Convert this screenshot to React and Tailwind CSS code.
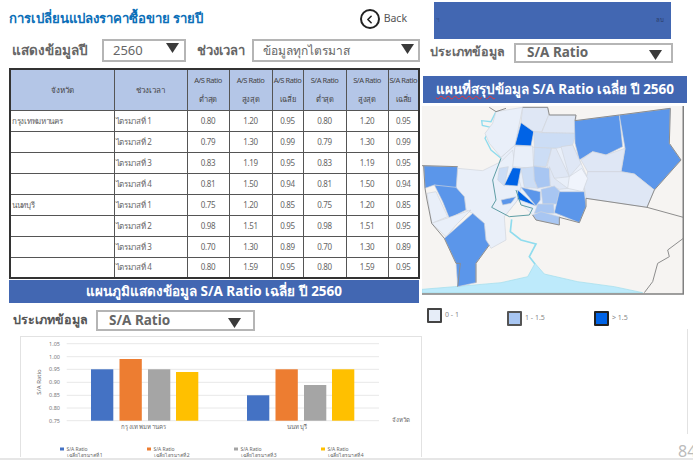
import React from "react";
import { ChevronLeft } from "lucide-react";

const FONT = { fontFamily: '"Noto Sans", "Open Sans", Tahoma, sans-serif' };

const rows = [
  ["กรุงเทพมหานคร", "ไตรมาสที่ 1", "0.80", "1.20", "0.95", "0.80", "1.20", "0.95"],
  ["", "ไตรมาสที่ 2", "0.79", "1.30", "0.99", "0.79", "1.30", "0.99"],
  ["", "ไตรมาสที่ 3", "0.83", "1.19", "0.95", "0.83", "1.19", "0.95"],
  ["", "ไตรมาสที่ 4", "0.81", "1.50", "0.94", "0.81", "1.50", "0.94"],
  ["นนทบุรี", "ไตรมาสที่ 1", "0.75", "1.20", "0.85", "0.75", "1.20", "0.85"],
  ["", "ไตรมาสที่ 2", "0.98", "1.51", "0.95", "0.98", "1.51", "0.95"],
  ["", "ไตรมาสที่ 3", "0.70", "1.30", "0.89", "0.70", "1.30", "0.89"],
  ["", "ไตรมาสที่ 4", "0.80", "1.59", "0.95", "0.80", "1.59", "0.95"],
];

const heads = [
  ["A/S Ratio", "ต่ำสุด"],
  ["A/S Ratio", "สูงสุด"],
  ["A/S Ratio", "เฉลี่ย"],
  ["S/A Ratio", "ต่ำสุด"],
  ["S/A Ratio", "สูงสุด"],
  ["S/A Ratio", "เฉลี่ย"],
];

function Tri({ className }) {
  return (
    <svg width="13" height="10" viewBox="0 0 13 10" className={className}>
      <path d="M0 0H13L6.5 10Z" fill="#3a3a3a" />
    </svg>
  );
}

function Select({ className, text, textClass, triClass }) {
  return (
    <div className={`flex items-center justify-between border-2 border-[#b5b5b5] bg-white ${className}`}>
      <span className={textClass}>{text}</span>
      <Tri className={triClass} />
    </div>
  );
}

function DataTable() {
  const widths = [104, 73, 42, 43, 31, 43, 42, 31];
  return (
    <table className="ml-[9px] w-[410px] table-fixed border-collapse border-2 border-[#333] text-[#666] text-[8px] leading-[10px]">
      <colgroup>
        {widths.map((w, i) => (
          <col key={i} style={{ width: w }} />
        ))}
      </colgroup>
      <thead>
        <tr className="h-[41px] bg-[#b4c6e7] text-[#444]">
          <th className="border border-[#555] font-normal">จังหวัด</th>
          <th className="border border-[#555] font-normal">ช่วงเวลา</th>
          {heads.map((h, i) => (
            <th key={i} className="overflow-hidden whitespace-nowrap border border-[#555] p-0 text-[7.5px] font-normal leading-[19px] tracking-[-0.45px]">
              <div>{h[0]}</div>
              <div>{h[1]}</div>
            </th>
          ))}
        </tr>
      </thead>
      <tbody>
        {rows.map((r, i) => (
          <tr key={i} className="h-[21px]">
            {r.map((c, j) => (
              <td
                key={j}
                className={`border border-[#555] p-0 tracking-[-0.3px] ${j < 2 ? "pl-[1px] text-left" : "text-center"}`}
              >
                {c}
              </td>
            ))}
          </tr>
        ))}
      </tbody>
    </table>
  );
}

function Banner({ className, children }) {
  return (
    <div className={`flex items-center justify-center whitespace-nowrap bg-[#4267b2] font-bold text-white ${className}`}>
      {children}
    </div>
  );
}

function Chart() {
  const grid = [
    ["1.05", 6.7],
    ["1.00", 19.7],
    ["0.95", 32.3],
    ["0.90", 45.3],
    ["0.85", 58.3],
    ["0.80", 71],
    ["0.75", 83.7],
  ];
  const bars = [
    [70, 32.3, "#4472c4"],
    [98.5, 22, "#ed7d31"],
    [127, 32.3, "#a5a5a5"],
    [155, 35, "#ffc000"],
    [226, 58.3, "#4472c4"],
    [254.5, 32.3, "#ed7d31"],
    [283, 48, "#a5a5a5"],
    [311, 32.3, "#ffc000"],
  ];
  const legend = [
    [39, "#4472c4", "เฉลี่ยไตรมาสที่ 1"],
    [126, "#ed7d31", "เฉลี่ยไตรมาสที่ 2"],
    [213, "#a5a5a5", "เฉลี่ยไตรมาสที่ 3"],
    [300, "#ffc000", "เฉลี่ยไตรมาสที่ 4"],
  ];
  return (
    <svg width="400" height="120" viewBox="0 0 400 120" className="block" style={FONT}>
      {grid.map(([l, y]) => (
        <g key={l}>
          <line x1="45.7" x2="358" y1={y} y2={y} stroke="#e8e8e8" strokeWidth="1" />
          <text x="39" y={y + 2} textAnchor="end" fontSize="5.5" fill="#777">
            {l}
          </text>
        </g>
      ))}
      {bars.map(([x, y, c], i) => (
        <rect key={i} x={x} y={y} width="22.3" height={83.7 - y} fill={c} />
      ))}
      <text x="0" y="0" transform="translate(19.5 45) rotate(-90)" textAnchor="middle" fontSize="6" fill="#666">
        S/A Ratio
      </text>
      <text x="123" y="92" textAnchor="middle" fontSize="6" letterSpacing="0.3" fill="#666">กรุงเทพมหานคร</text>
      <text x="276" y="92" textAnchor="middle" fontSize="6" letterSpacing="0.3" fill="#666">นนทบุรี</text>
      <text x="371" y="85" fontSize="6" fill="#666">จังหวัด</text>
      {legend.map(([x, c, t]) => (
        <g key={x}>
          <rect x={x} y="110.5" width="4" height="3" fill={c} />
          <text x={x + 6.5} y="114" fontSize="5" fill="#666">S/A Ratio</text>
          <text x={x + 6.5} y="119.5" fontSize="5" fill="#666">{t}</text>
        </g>
      ))}
    </svg>
  );
}

const L = "#e9eff9";
const L2 = "#dfe7f5";
const M = "#ccddf5";
const B = "#a8c6f2";
const C = "#5b96ea";
const D = "#0063e6";

const districts = [
  ["240,172 282,135 340,142 455,135 480,190 500,235 490,275 415,350 335,345 290,300 250,350 215,320 215,240", L],
  ["225,35 305,22 282,135 240,172 205,130 192,100 215,70", L],
  ["305,22 380,22 383,45 362,95 338,95 300,68", L2],
  ["300,68 338,95 330,138 282,135", D],
  ["383,45 465,45 465,100 362,98", L2],
  ["338,95 362,98 465,100 455,135 405,145 340,142", M],
  ["460,62 595,45 605,140 555,165 515,155 475,180 462,130", C],
  ["595,45 748,25 745,130 780,180 700,270 640,222 600,215 612,145", C],
  ["480,180 515,155 555,165 612,145 600,215 500,215", L2],
  ["500,215 600,215 640,222 700,270 678,322 495,295 490,260", L2],
  ["110,205 185,212 240,185 275,150 282,200 300,260 290,300 250,350 255,420 210,445 195,420 190,370 155,340 135,330 130,290 105,265", L],
  ["282,138 335,138 338,205 275,200", L],
  ["340,142 392,145 375,200 338,198", M],
  ["392,145 405,145 445,230 400,235 378,200", L2],
  ["420,140 455,135 480,190 445,230", L2],
  ["445,230 482,205 500,235 485,275 440,265", "#f0f4fc"],
  ["300,205 340,200 340,240 350,265 310,262", M],
  ["338,198 385,205 388,258 350,265 340,240", B],
  ["385,200 400,235 440,265 415,268 388,258", L2],
  ["235,205 262,200 250,258 230,240", M],
  ["275,203 300,205 290,258 250,255", D],
  ["300,262 358,275 358,300 345,318", C],
  ["290,270 345,318 290,298", D],
  ["360,268 400,258 418,275 415,312 365,312", B],
  ["415,275 490,275 495,320 475,368 400,338", C],
  ["350,312 398,312 400,340 340,340", B],
  ["335,345 360,335 415,350 415,375 345,360", B],
  ["8,197 110,200 105,272 40,255 12,265", C],
  ["40,255 105,262 130,290 135,330 85,355 65,305", C],
  ["18,280 45,275 80,350 32,370", L],
  ["32,370 85,352 150,330 110,370 75,410", L],
  ["155,340 190,370 195,420 205,435 165,490 165,548 110,560 105,490 70,415", C],
  ["240,300 285,290 270,310 245,315", C],
];

function MapDrawing() {
  return (
    <svg width="262" height="189" viewBox="3 18 786 567" className="block blur-[0.6px]">
      <rect x="3" y="18" width="784" height="564" fill="#f6f4f2" />
      <path d="M3 568 L100 560 L240 548 L320 530 L342 490 L370 522 L470 545 L580 560 L665 578 L3 578Z" fill="#bdeafb" stroke="#9fdcec" strokeWidth="2" />
      <path d="M272 358 L268 395 L300 420 L345 432 L325 470 L342 492" fill="none" stroke="#8fdcee" strokeWidth="5" />
      <path d="M225 35 L210 65 L182 62 L184 76 L210 82 L192 115 L210 150 L240 175" fill="none" stroke="#8fdcee" strokeWidth="4" />
      {districts.map(([p, f], i) => (
        <polygon key={i} points={p} fill={f} stroke="#d0d4dc" strokeWidth="2" />
      ))}
      <path d="M205 22 L225 35 L255 25 M305 22 L380 22 L385 45 L465 45 L462 62 L595 45 L748 25 L745 130 L780 180 L700 270 L678 322 L787 352 M678 322 L495 295 L495 320 L475 368 L415 352 L415 375 L345 360 L335 345 M3 197 L110 200 M8 197 L12 265 L18 300 L32 370 L70 415 L105 490 L118 490 L110 560 M165 548 L165 490 L205 435" fill="none" stroke="#8d8d8d" strokeWidth="3" />
      <path d="M787 415 L740 450 L745 470 L710 490 L695 545 L670 578" fill="none" stroke="#8d8d8d" strokeWidth="3" />
      <path d="M240 175 L215 240 L225 300 L212 322 L265 350 L325 345 L335 325 L300 315 L285 270" fill="none" stroke="#5f9ea5" strokeWidth="3" />
      <path d="M787 18 V582 H3" fill="none" stroke="#808080" strokeWidth="5" />
    </svg>
  );
}

function MapLegendItem({ fill, stroke, label, className }) {
  return (
    <div className={`flex items-center gap-[3px] ${className}`}>
      <div className={`h-[15px] w-[15px] rounded-[1px] border-2 ${fill} ${stroke}`} />
      <span className="text-[7px] text-[#888]">{label}</span>
    </div>
  );
}

export default function App() {
  return (
    <div className="relative flex h-[460px] w-[693px] flex-col overflow-hidden bg-white" style={FONT}>
      <div className="flex h-[458px]">
        <div className="flex w-[422px] shrink-0 flex-col">
          <div className="mt-[7px] flex h-[24px] items-center">
            <h1 className="ml-[9px] text-[13.2px] font-bold text-[#0b6fb8]">การเปลี่ยนแปลงราคาซื้อขาย รายปี</h1>
            <div className="ml-auto mr-[15px] flex items-center gap-[4px]">
              <div className="flex h-[20px] w-[20px] items-center justify-center rounded-full border-2 border-[#222]">
                <ChevronLeft size={13} strokeWidth={3} color="#222" />
              </div>
              <span className="text-[10.5px] text-[#555]">Back</span>
            </div>
          </div>
          <div className="mt-[8px] flex h-[23px] items-center">
            <span className="ml-[12px] w-[90px] text-[13.5px] font-bold text-[#666]">แสดงข้อมูลปี</span>
            <Select
              className="h-[23px] w-[84px] pl-[9px] pr-[5px]"
              text="2560"
              textClass="text-[13px] text-[#666]"
              triClass="-mt-[6px]"
            />
            <span className="ml-[11px] w-[55px] text-[13px] font-bold text-[#666]">ช่วงเวลา</span>
            <Select
              className="h-[23px] w-[168px] pl-[9px] pr-[4px]"
              text="ข้อมูลทุกไตรมาส"
              textClass="text-[12px] text-[#666]"
              triClass="-mt-[4px]"
            />
          </div>
          <div className="mt-[6px]">
            <DataTable />
          </div>
          <Banner className="ml-[9px] mt-[1px] h-[23px] w-[410px] text-[13.5px]">
            แผนภูมิแสดงข้อมูล S/A Ratio เฉลี่ย ปี 2560
          </Banner>
          <div className="mt-[7px] flex h-[21px] items-center">
            <span className="ml-[13px] w-[83px] text-[12.5px] font-bold text-[#555]">ประเภทข้อมูล</span>
            <Select
              className="h-[21px] w-[159px] pl-[11px] pr-[12px]"
              text="S/A Ratio"
              textClass="text-[13.5px] font-bold text-[#666]"
              triClass="mt-[4px]"
            />
          </div>
          <div className="ml-[20px] mt-[5px] h-[121px] w-[402px] border-l border-r border-t border-[#e2e2e2]">
            <Chart />
          </div>
        </div>
        <div className="flex flex-1 flex-col">
          <div className="ml-[12px] mt-[2px] flex h-[37px] w-[237px] items-center justify-between bg-[#4267b2] pl-[2px] pr-[7px]">
            <span className="text-[6px] leading-[5px] text-[#2f4d8a]">ฯ</span>
            <span className="text-[6px] text-[#2b3c66]">ลบ</span>
          </div>
          <div className="mt-[4px] flex h-[19px] items-center">
            <span className="ml-[8px] w-[84px] text-[12.5px] font-bold text-[#666]">ประเภทข้อมูล</span>
            <Select
              className="h-[20px] w-[159px] pl-[11px] pr-[9px]"
              text="S/A Ratio"
              textClass="text-[13.5px] font-bold text-[#666]"
              triClass="mt-[4px]"
            />
          </div>
          <Banner className="ml-[1px] mt-[14px] h-[27px] w-[264px] text-[13.5px]">
            <span>
              <span className="underline decoration-wavy decoration-[#e33] decoration-1">แผนที่สรุป</span>ข้อมูล S/A Ratio เฉลี่ย ปี 2560
            </span>
          </Banner>
          <div className="mt-[3px]">
            <MapDrawing />
          </div>
          <div className="mt-[13px] flex h-[18px] items-start">
            <MapLegendItem className="ml-[5px] w-[80px]" fill="bg-[#e6edf8]" stroke="border-[#444]" label="0 - 1" />
            <MapLegendItem className="mt-[3px] w-[87px]" fill="bg-[#a8c6f2]" stroke="border-[#555]" label="1 - 1.5" />
            <MapLegendItem className="mt-[3px]" fill="bg-[#0063e6]" stroke="border-[#222]" label="> 1.5" />
          </div>
        </div>
      </div>
      <div className="h-[2px] bg-[#e6e6e6]" />
      <div className="absolute left-[687px] top-[329px] h-[105px] w-px bg-[#e2e2e2]" />
      <span className="absolute left-[678px] top-[442px] text-[16px] leading-[18px] text-[#bbb]">84</span>
    </div>
  );
}
